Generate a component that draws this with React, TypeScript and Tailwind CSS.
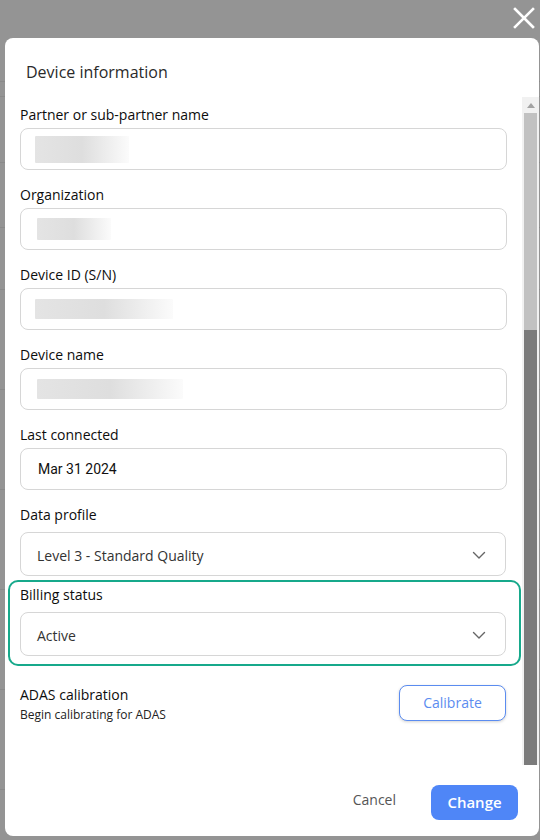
import React from "react";

const font = { fontFamily: '"Open Sans", "Noto Sans", sans-serif' };

function Blur({ w, h }: { w: number; h: number }) {
  return (
    <div
      className="rounded-[1px] bg-gradient-to-r from-[#e4e4e4] via-[#dedede] to-[#fbfbfb]"
      style={{ width: w, height: h }}
    />
  );
}

function Chevron() {
  return (
    <svg width="14" height="9" viewBox="0 0 14 9" fill="none">
      <path d="M1.5 1.5 L7 7 L12.5 1.5" stroke="#666" strokeWidth="1.4" strokeLinecap="round" strokeLinejoin="round" />
    </svg>
  );
}

function Field({ label, children, pl = 14 }: { label: string; children: React.ReactNode; pl?: number }) {
  return (
    <div className="flex flex-col">
      <div className="text-[14px] leading-[20px] font-medium text-[#0d0d0d]">{label}</div>
      <div
        className="mt-[3px] h-[42px] w-[487px] rounded-[8px] border border-[#d6d6d6] flex items-center"
        style={{ paddingLeft: pl }}
      >
        {children}
      </div>
    </div>
  );
}

export default function App() {
  return (
    <div className="relative w-[540px] h-[840px] overflow-hidden bg-[#949494]" style={font}>
      {/* underlying page lines */}
      <div className="absolute inset-0 flex flex-col">
        <div className="h-[82px] border-b border-[#8a8a8a]" />
        <div className="h-[15px] border-b border-[#8a8a8a]" />
        <div className="h-[66px] border-b border-[#8a8a8a]" />
        <div className="h-[65px] border-b border-[#8a8a8a]" />
        <div className="h-[62px] border-b border-[#8a8a8a]" />
        <div className="h-[100px] border-b border-[#8a8a8a]" />
        <div className="h-[100px] border-b border-[#8a8a8a]" />
        <div className="h-[100px] border-b border-[#8a8a8a]" />
        <div className="h-[100px] border-b border-[#8a8a8a]" />
        <div className="h-[100px] border-b border-[#8a8a8a]" />
      </div>

      {/* close */}
      <button className="absolute right-[5px] top-[7px] w-[22px] h-[22px] flex items-center justify-center">
        <svg width="22" height="22" viewBox="0 0 22 22">
          <path d="M2 2 L20 20 M20 2 L2 20" stroke="#fff" strokeWidth="2.6" strokeLinecap="square" />
        </svg>
      </button>

      {/* modal */}
      <div className="absolute left-[5px] top-[38px] w-[534px] h-[798px] bg-white rounded-[8px] flex flex-col overflow-hidden">
        <div className="h-[59px] shrink-0 pl-[21px] pt-[22px] text-[16px] leading-[24px] text-[#2a2a2a]">
          Device information
        </div>

        <div className="h-[668px] shrink-0 flex">
          <div className="flex-1 pl-[15px] pt-[8px] overflow-hidden">
            <div className="flex flex-col gap-[15px]">
              <Field label="Partner or sub-partner name">
                <Blur w={94} h={27} />
              </Field>
              <Field label="Organization" pl={16}>
                <Blur w={74} h={22} />
              </Field>
              <Field label="Device ID (S/N)">
                <Blur w={138} h={20} />
              </Field>
              <Field label="Device name" pl={16}>
                <Blur w={146} h={20} />
              </Field>
              <Field label="Last connected" pl={17}>
                <span className="text-[14px] text-[#111]" style={{ fontFamily: 'Roboto, "Noto Sans", sans-serif' }}>
                  Mar 31 2024
                </span>
              </Field>
            </div>

            <div className="mt-[15px] flex flex-col">
              <div className="text-[14px] leading-[20px] font-medium text-[#0d0d0d]">Data profile</div>
              <div className="mt-[7px] h-[44px] w-[486px] rounded-[8px] border border-[#d6d6d6] flex items-center justify-between pl-[16px] pr-[19px] pt-[3px]">
                <span className="text-[14px] text-[#333]">Level 3 - Standard Quality</span>
                <Chevron />
              </div>
            </div>

            <div className="mt-[4px] -ml-[12px] w-[513px] h-[86px] rounded-[10px] border-2 border-[#17a98b] pl-[10px] pt-[3px] flex flex-col">
              <div className="text-[14px] leading-[20px] font-medium text-[#0d0d0d]">Billing status</div>
              <div className="mt-[7px] h-[44px] w-[486px] rounded-[8px] border border-[#d6d6d6] flex items-center justify-between pl-[16px] pr-[19px] pt-[3px]">
                <span className="text-[14px] text-[#333]">Active</span>
                <Chevron />
              </div>
            </div>

            <div className="mt-[19px] w-[486px] flex items-start justify-between">
              <div className="flex flex-col">
                <div className="text-[14px] leading-[20px] font-medium text-[#0d0d0d]">ADAS calibration</div>
                <div className="mt-[1px] text-[12px] leading-[18px] text-[#222]">Begin calibrating for ADAS</div>
              </div>
              <button className="w-[107px] h-[36px] pb-[2px] rounded-[8px] border border-[#5b8cf0] bg-white text-[14px] text-[#5b8cf0] shadow-[0_1px_3px_rgba(0,0,0,0.18)]">
                Calibrate
              </button>
            </div>
          </div>

          <div className="w-[17px] shrink-0 bg-[#f1f1f1] flex flex-col items-center">
            <div className="h-[16px] w-full flex items-center justify-center">
              <svg width="8" height="5" viewBox="0 0 8 5">
                <path d="M0 5 L4 0 L8 5 Z" fill="#a3a3a3" />
              </svg>
            </div>
            <div className="w-[13px] h-[217px] bg-[#c1c1c1]" />
            <div className="w-[13px] flex-1 bg-[#7b7b7b]" />
          </div>
        </div>

        <div className="flex-1 flex items-start justify-end pr-[21px] pt-[20px]">
          <button className="h-[35px] mr-[35px] text-[14px] text-[#555] leading-[35px] -mt-[3px]">Cancel</button>
          <button className="w-[87px] h-[35px] rounded-[8px] bg-[#4f86f7] text-white text-[15px] font-semibold">
            Change
          </button>
        </div>
      </div>
    </div>
  );
}
